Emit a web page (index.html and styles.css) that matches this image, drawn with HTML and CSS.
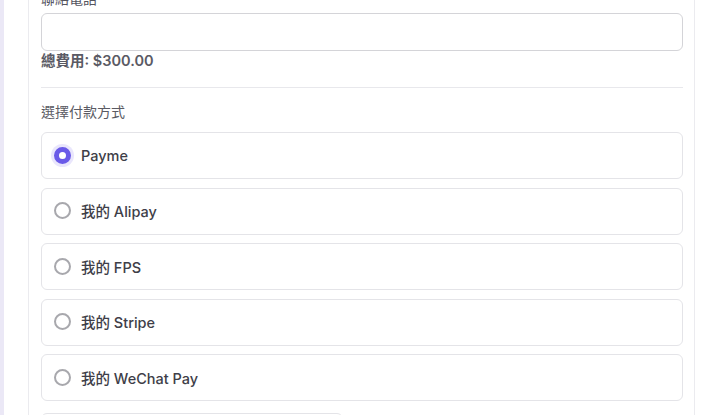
FILE: index.html
```html
<!DOCTYPE html>
<html lang="zh-Hant">
<head>
<meta charset="utf-8">
<link rel="stylesheet" href="styles.css">
</head>
<body>
<div class="page">
  <div class="card">
    <div class="inner">
      <label class="field-label">聯絡電話</label>
      <input class="text-input" type="text">
      <div class="total">總費用: $300.00</div>
      <hr class="divider">
      <div class="section-label">選擇付款方式</div>
      <div class="options">
        <label class="option"><span class="radio checked"></span><span class="opt-text">Payme</span></label>
        <label class="option"><span class="radio"></span><span class="opt-text">我的 Alipay</span></label>
        <label class="option"><span class="radio"></span><span class="opt-text">我的 FPS</span></label>
        <label class="option"><span class="radio"></span><span class="opt-text">我的 Stripe</span></label>
        <label class="option"><span class="radio"></span><span class="opt-text">我的 WeChat Pay</span></label>
      </div>
      <div class="next-box"></div>
    </div>
  </div>
</div>
</body>
</html>
```
FILE: styles.css
```css
html, body {
  margin: 0;
  padding: 0;
  background: #fff;
  overflow: hidden;
  height: 415px;
}
body {
  font-family: Inter, "Noto Sans CJK TC", sans-serif;
  color: #4a4a55;
}
.page {
  display: flex;
  height: 415px;
  border-left: 4px solid #ebe8f6;
}
.card {
  margin-left: 24px;
  width: 665px;
  border-left: 1px solid #ebebef;
  border-right: 1px solid #ebebef;
  height: 415px;
  overflow: hidden;
}
.inner {
  margin-top: -11px;
  padding: 0 11px 0 12px;
  display: flex;
  flex-direction: column;
}
.field-label {
  font-size: 14px;
  line-height: 20px;
  margin-bottom: 4px;
  color: #55555f;
}
.text-input {
  box-sizing: border-box;
  height: 38px;
  border: 1px solid #d4d4d8;
  border-radius: 6px;
  background: #fff;
  margin: 0;
  width: 100%;
}
.total {
  font-size: 14.5px;
  font-weight: 600;
  line-height: 20px;
  color: #5a5a64;
}
.divider {
  border: 0;
  border-top: 1px solid #e8e8ec;
  margin: 16px 0 0;
  height: 0;
}
.section-label {
  margin-top: 14px;
  font-size: 14px;
  line-height: 20px;
  color: #5a5a63;
}
.options {
  margin-top: 10px;
  display: flex;
  flex-direction: column;
  gap: 8.5px;
}
.option {
  box-sizing: border-box;
  height: 47px;
  border: 1px solid #e4e4e8;
  border-radius: 6px;
  display: flex;
  align-items: center;
  padding: 0 0 1px 12px;
  gap: 10px;
}
.radio {
  box-sizing: border-box;
  width: 17px;
  height: 17px;
  border-radius: 50%;
  border: 2px solid #a8a8ad;
  background: #fff;
}
.radio.checked {
  border: 5px solid #6a5ae8;
  box-shadow: 0 0 0 3px rgba(106, 90, 232, 0.15);
}
.opt-text {
  font-size: 14.5px;
  font-weight: 500;
  color: #3e3e48;
}
.next-box {
  margin-top: 12px;
  width: 300px;
  height: 40px;
  border: 1px solid #e4e4e8;
  border-radius: 6px;
}
```
